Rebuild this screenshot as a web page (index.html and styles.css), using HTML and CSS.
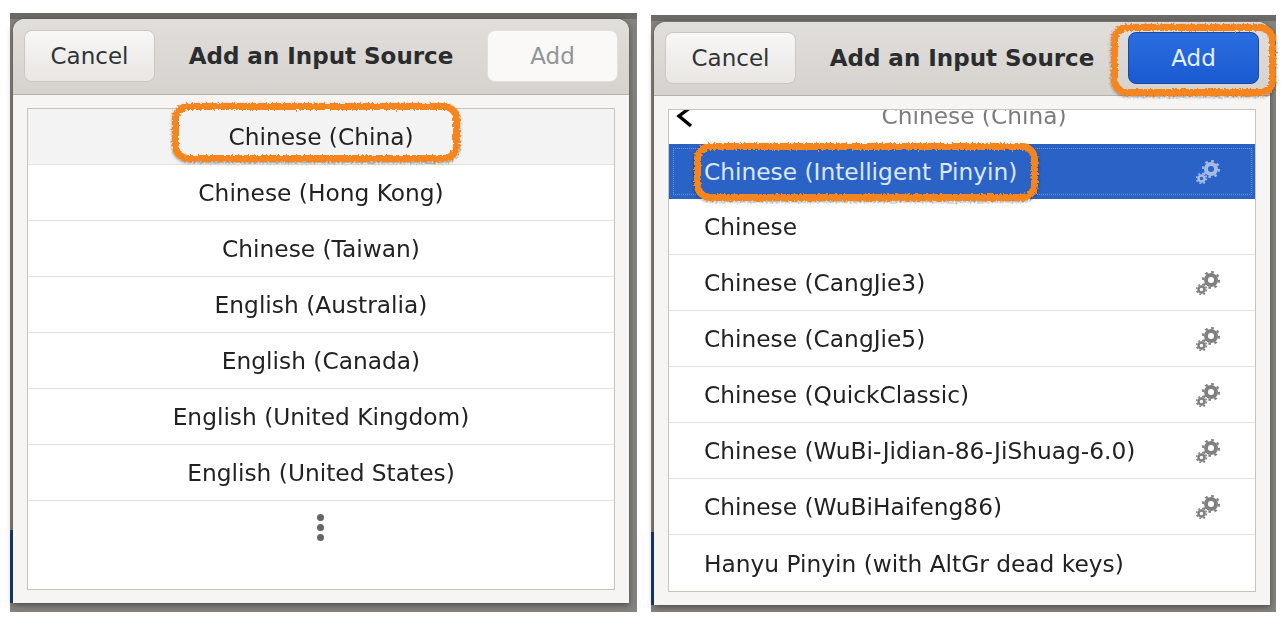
FILE: index.html
```html
<!DOCTYPE html>
<html lang="en">
<head>
    <meta charset="UTF-8">
    <title>Add an Input Source</title>
    <link rel="stylesheet" href="styles.css">
</head>
<body>
    <svg class="defs" width="0" height="0">
        <filter id="rough" x="-5%" y="-10%" width="110%" height="120%">
            <feTurbulence type="fractalNoise" baseFrequency="0.5" numOctaves="2" seed="4"/>
            <feDisplacementMap in="SourceGraphic" scale="5"/>
        </filter>
        <symbol id="gears" viewBox="0 0 24 24">
            <circle cx="15" cy="9" r="5" fill="none" stroke="currentColor" stroke-width="4"/>
            <circle cx="15" cy="9" r="8" fill="none" stroke="currentColor" stroke-width="2.2" stroke-dasharray="2.6 3.68"/>
            <circle cx="5.5" cy="18.5" r="3" fill="none" stroke="currentColor" stroke-width="2.6"/>
            <circle cx="5.5" cy="18.5" r="5" fill="none" stroke="currentColor" stroke-width="1.6" stroke-dasharray="1.9 2.03"/>
        </symbol>
    </svg>

    <div class="stage">
        <!-- step 1: pick the language -->
        <div class="shot shot-left">
            <div class="window">
                <div class="header">
                    <button class="btn">Cancel</button>
                    <div class="title">Add an Input Source</div>
                    <button class="btn btn-off">Add</button>
                </div>
                <div class="content">
                    <div class="list">
                        <div class="row center row-hover">Chinese (China)</div>
                        <div class="row center">Chinese (Hong Kong)</div>
                        <div class="row center">Chinese (Taiwan)</div>
                        <div class="row center">English (Australia)</div>
                        <div class="row center">English (Canada)</div>
                        <div class="row center">English (United Kingdom)</div>
                        <div class="row center">English (United States)</div>
                        <div class="row center row-more">
                            <span class="dots"><i></i><i></i><i></i></span>
                        </div>
                    </div>
                </div>
            </div>
            <div class="mark mark-china"></div>
        </div>

        <!-- step 2: pick the input method -->
        <div class="shot shot-right">
            <div class="window">
                <div class="header">
                    <button class="btn">Cancel</button>
                    <div class="title">Add an Input Source</div>
                    <button class="btn btn-blue">Add</button>
                </div>
                <div class="content">
                    <div class="list">
                        <div class="row-clip">
                            <svg class="back" width="20" height="22" viewBox="0 0 20 22"><path d="M17 0 5 9 17 19" fill="none" stroke="#000" stroke-width="3.4"/></svg>
                            <span>Chinese (China)</span>
                        </div>
                        <div class="row row-selected">
                            <span>Chinese (Intelligent Pinyin)</span>
                            <svg class="gear" width="24" height="24"><use href="#gears"/></svg>
                        </div>
                        <div class="row"><span>Chinese</span></div>
                        <div class="row">
                            <span>Chinese (CangJie3)</span>
                            <svg class="gear" width="24" height="24"><use href="#gears"/></svg>
                        </div>
                        <div class="row">
                            <span>Chinese (CangJie5)</span>
                            <svg class="gear" width="24" height="24"><use href="#gears"/></svg>
                        </div>
                        <div class="row">
                            <span>Chinese (QuickClassic)</span>
                            <svg class="gear" width="24" height="24"><use href="#gears"/></svg>
                        </div>
                        <div class="row">
                            <span>Chinese (WuBi-Jidian-86-JiShuag-6.0)</span>
                            <svg class="gear" width="24" height="24"><use href="#gears"/></svg>
                        </div>
                        <div class="row">
                            <span>Chinese (WuBiHaifeng86)</span>
                            <svg class="gear" width="24" height="24"><use href="#gears"/></svg>
                        </div>
                        <div class="row row-last"><span>Hanyu Pinyin (with AltGr dead keys)</span></div>
                    </div>
                </div>
            </div>
            <div class="mark mark-add"></div>
            <div class="mark mark-pinyin"></div>
        </div>
    </div>
</body>
</html>
```

FILE: styles.css
```css
html, body { margin: 0; background: #fff; }
body { width: 1284px; height: 620px; overflow: hidden; font-family: "DejaVu Sans", sans-serif; color: #222; }
.defs { position: absolute; }

.stage { display: flex; align-items: flex-start; }
.shot { position: relative; box-sizing: border-box; height: 599px; padding: 6px 8px 9px 3px; background: linear-gradient(#1d3b72, #1d3b72) 0 517px / 3px 73px no-repeat, linear-gradient(#6c6a67, #6c6a67) 0 0 / 100% 6px no-repeat, #85837f; }
.shot-left { width: 627px; margin: 13px 0 0 10px; }
.shot-right { width: 625px; margin: 15px 0 0 14px; height: 597px; padding: 7px 6px 7px 3px; }

.window { display: flex; flex-direction: column; height: 100%; background: #f6f5f4; border-radius: 12px 12px 0 0; overflow: hidden; box-shadow: 0 2px 6px rgba(0, 0, 0, .45); filter: blur(.45px); }
.header { display: flex; align-items: center; justify-content: space-between; box-sizing: border-box; height: 76px; padding: 0 11px 1px; background: linear-gradient(#e1dedb, #d6d2ce); border-bottom: 1px solid #b6b0aa; }
.title { font-size: 23px; font-weight: bold; color: #2a2c2e; }

.btn { box-sizing: border-box; width: 131px; height: 52px; border: 1px solid #cdc7c2; border-radius: 8px; background: linear-gradient(#f8f7f6, #e9e6e3); font: 23px "DejaVu Sans", sans-serif; color: #2e3436; }
.btn-off { background: #faf9f8; border-color: #e3dfdb; color: #929595; }
.btn-blue { background: linear-gradient(#2a6ee0, #1b5ad2); border-color: #1a4a9c; color: #e6effc; }

.content { flex: 1; padding: 13px 14px; }
.list { box-sizing: border-box; height: 100%; background: #fff; border: 1px solid #c8c3be; overflow: hidden; font-size: 23.3px; }
.row { display: flex; align-items: center; justify-content: space-between; box-sizing: border-box; height: 56px; padding: 0 35px; border-bottom: 1px solid #e4e1de; }
.center { justify-content: center; padding: 0; }
.row-hover { background: #f3f3f3; }
.row-more { border-bottom: none; }
.row-last { border-bottom: none; }

.row-clip { position: relative; display: flex; justify-content: center; height: 34px; padding-left: 24px; line-height: 12px; color: #7b7d7c; }
.back { position: absolute; left: 5px; top: -3px; }
.row-selected { position: relative; height: 55px; background: #2a62c6; border-bottom: none; color: #dce8fb; }
.row-selected::after { content: ""; position: absolute; top: 4px; left: 4px; right: 3px; bottom: 4px; border: 1px dotted #6f97dc; }
.row-selected .gear { color: #a5bce6; }

.gear { color: #808080; flex: none; }
.dots { display: flex; flex-direction: column; gap: 3px; margin: -4px 2px 0 0; }
.dots i { width: 7px; height: 7px; border-radius: 50%; background: #666; }

.mark { position: absolute; box-sizing: border-box; border: 7px solid #f5851a; border-radius: 16px; box-shadow: 0 1px 3px rgba(0, 0, 0, .4); filter: url(#rough); }
.mark-china { left: 162px; top: 90px; width: 288px; height: 59px; }
.mark-add { left: 460px; top: 9px; width: 165px; height: 72px; }
.mark-pinyin { left: 43px; top: 128px; width: 344px; height: 58px; }
```
